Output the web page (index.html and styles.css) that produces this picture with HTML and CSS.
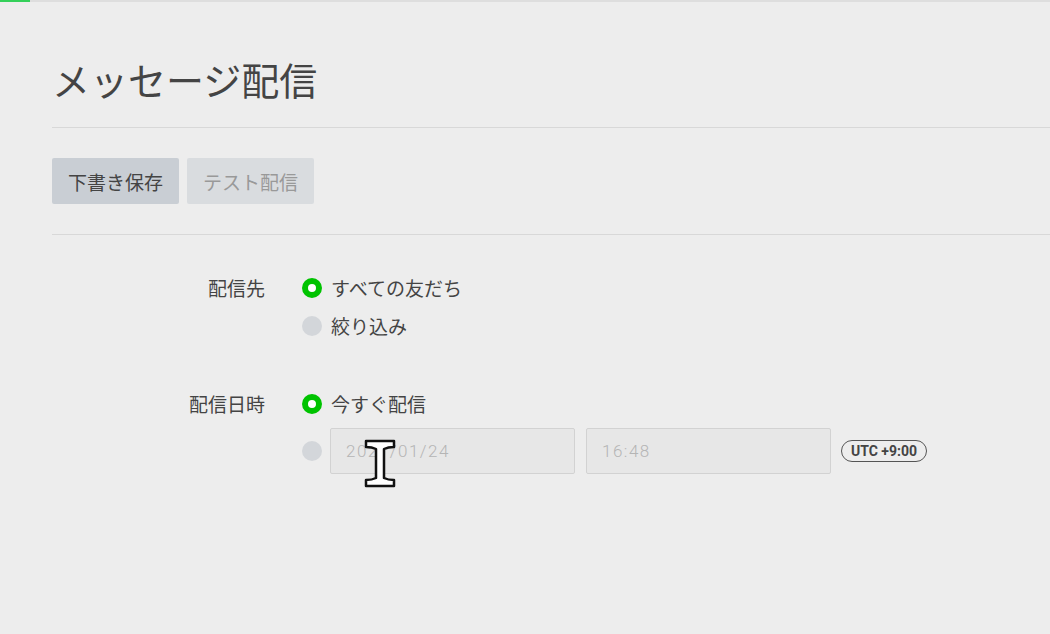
FILE: index.html
```html
<!DOCTYPE html>
<html lang="ja">
<head>
<meta charset="UTF-8">
<meta name="viewport" content="width=device-width, initial-scale=1.0">
<title>メッセージ配信</title>
<link rel="stylesheet" href="styles.css">
</head>
<body>

<div class="progress"><div class="progress-bar"></div></div>

<div class="page">
    <div class="page-header">
        <h1>メッセージ配信</h1>
    </div>

    <div class="toolbar">
        <button class="btn btn-save">下書き保存</button>
        <button class="btn btn-test">テスト配信</button>
    </div>

    <div class="form">
        <div class="form-row">
            <div class="form-label">配信先</div>
            <div class="form-options">
                <label class="option"><span class="radio checked"></span>すべての友だち</label>
                <label class="option"><span class="radio"></span>絞り込み</label>
            </div>
        </div>

        <div class="form-row">
            <div class="form-label">配信日時</div>
            <div class="form-options">
                <label class="option"><span class="radio checked"></span>今すぐ配信</label>
                <div class="option option-date">
                    <span class="radio"></span>
                    <input class="field" type="text" value="2021/01/24" disabled>
                    <input class="field" type="text" value="16:48" disabled>
                    <span class="tz">UTC +9:00</span>
                </div>
            </div>
        </div>
    </div>
</div>

<!-- mouse cursor captured in the screenshot -->
<svg class="cursor" width="32" height="49" viewBox="0 0 32 49">
    <path d="M2,2 H30 V8 Q24,8 20,10 V39 Q24,41 30,41 V47 H2 V41 Q8,41 12,39 V10 Q8,8 2,8 Z" fill="#fff" stroke="#111" stroke-width="2.5" stroke-linejoin="round"/>
</svg>

</body>
</html>
```

FILE: styles.css
```css
body {
    margin: 0;
    padding: 0;
    background-color: #ededed;
    font-family: "Noto Sans CJK JP", "Noto Sans", sans-serif;
    color: #444;
}
.progress {
    height: 2px;
    background-color: #dedede;
}
.progress-bar {
    width: 30px;
    height: 2px;
    background-color: #35d05a;
}
.page {
    padding-left: 52px;
}
.page-header {
    border-bottom: 1px solid #d8d8d8;
    padding: 54px 0 25px;
}
h1 {
    margin: 0;
    font-size: 38px;
    font-weight: 400;
    line-height: 46px;
    color: #444;
}
.toolbar {
    display: flex;
    gap: 8px;
    padding: 30px 0;
    border-bottom: 1px solid #d8d8d8;
}
.btn {
    width: 127px;
    height: 46px;
    border: none;
    border-radius: 2px;
    font-family: inherit;
    font-size: 19px;
    padding: 0;
}
.btn-save {
    background-color: #c9ced4;
    color: #444;
}
.btn-test {
    background-color: #d9dcdf;
    color: #999;
}
.form {
    padding-top: 36px;
}
.form-row {
    display: grid;
    grid-template-columns: 213px 1fr;
    column-gap: 37px;
    margin-bottom: 44px;
}
.form-label {
    text-align: right;
    font-size: 19px;
    line-height: 34px;
}
.form-options {
    display: flex;
    flex-direction: column;
    gap: 4px;
}
.option {
    display: flex;
    align-items: center;
    gap: 9px;
    font-size: 19px;
    line-height: 34px;
}
.option-date {
    gap: 8px;
    margin-top: 3px;
}
.radio {
    box-sizing: border-box;
    width: 20px;
    height: 20px;
    border-radius: 50%;
    background-color: #d3d6da;
    flex-shrink: 0;
}
.radio.checked {
    background-color: #fff;
    border: 6px solid #00c300;
}
.field {
    box-sizing: border-box;
    width: 245px;
    height: 46px;
    margin: 0 3px 0 0;
    padding: 0 15px;
    border: 1px solid #d2d2d2;
    border-radius: 2px;
    background-color: #e7e7e7;
    font-family: Roboto, sans-serif;
    font-size: 17px;
    font-weight: 300;
    letter-spacing: 1.5px;
    color: #b5b5b5;
}
.tz {
    margin-left: -1px;
    padding: 0 9px;
    height: 20px;
    line-height: 20px;
    border: 1.5px solid #555;
    border-radius: 12px;
    font-family: Roboto, sans-serif;
    font-size: 14px;
    font-weight: 700;
    color: #444;
}
.cursor {
    position: absolute;
    left: 364px;
    top: 439px;
}
```
